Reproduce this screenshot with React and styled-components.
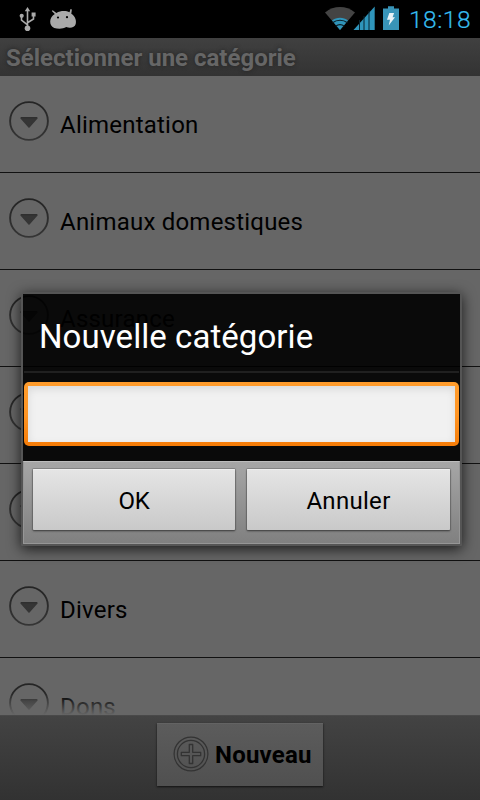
import React from 'react';
import styled, { createGlobalStyle } from 'styled-components';

const Global = createGlobalStyle`
  * { box-sizing: border-box; }
  body { margin: 0; background: #000; font-family: Roboto, sans-serif; }
`;

const Screen = styled.div`
  position: relative;
  width: 480px;
  height: 800px;
  overflow: hidden;
  display: flex;
  flex-direction: column;
  background: #666;
`;

const StatusBar = styled.div`
  height: 38px;
  flex: none;
  display: flex;
  justify-content: space-between;
  background: #000;
`;

const Clock = styled.span`
  color: #36bdef;
  font-size: 24.5px;
  line-height: 38px;
  letter-spacing: 0.5px;
  font-weight: 300;
  width: 71px;
  margin: 1px 0 0 1px;
  white-space: nowrap;
  -webkit-text-stroke: 0.2px #36bdef;
`;

const StatusRight = styled.div`
  display: flex;
`;

const TitleBar = styled.div`
  height: 38px;
  flex: none;
  padding-left: 6px;
  background: linear-gradient(#404040, #333);
  color: #666;
  font-size: 24px;
  font-weight: 700;
  line-height: 41px;
  letter-spacing: 0;
  white-space: nowrap;
  text-shadow: 0 0 4px #222;
`;

const List = styled.div`
  flex: 1;
  min-height: 0;
  overflow: hidden;
`;

const Row = styled.div`
  height: 97px;
  display: flex;
  align-items: flex-start;
  border-bottom: 1px solid #111;
`;

const Label = styled.span`
  margin: 29px 0 0 11px;
  color: #000;
  font-size: 24px;
  line-height: 40px;
  letter-spacing: 0.22px;
  white-space: nowrap;
`;

const RowIcon = styled.svg`
  flex: none;
  width: 40px;
  height: 40px;
  margin: 25px 0 0 9px;
`;

const BottomBar = styled.div`
  position: relative;
  height: 85px;
  flex: none;
  padding-top: 8px;
  display: flex;
  justify-content: center;
  align-items: flex-start;
  background: linear-gradient(#434343, #323232);
  border-top: 1px solid #494949;
`;

const Fade = styled.div`
  position: absolute;
  left: 0;
  right: 0;
  top: -22px;
  height: 21px;
  background: linear-gradient(rgba(102, 102, 102, 0), #666);
`;

const NewButton = styled.button`
  width: 166px;
  height: 63px;
  margin-top: -1px;
  padding: 0 0 0 15px;
  border: 0;
  display: flex;
  align-items: center;
  background: linear-gradient(#5c5c5c, #505050);
  box-shadow: 0 1px 2px #111, inset 0 1px #636363;
  font: 700 24px/62px Roboto, sans-serif;
  letter-spacing: 0.2px;
  color: #000;
`;

const PlusSvg = styled.svg`
  width: 38px;
  height: 38px;
  margin-bottom: 1px;
`;

const NewLabel = styled.span`
  margin-left: 5px;
`;

const Dialog = styled.div`
  position: absolute;
  left: 21px;
  top: 292px;
  width: 441px;
  height: 254px;
  border: 2px solid #555;
  border-radius: 2px;
  box-shadow: 0 3px 14px rgba(0, 0, 0, 0.75);
  display: flex;
  flex-direction: column;
`;

const DialogBody = styled.div`
  height: 167px;
  flex: none;
  display: flex;
  flex-direction: column;
  padding: 0 1px;
  background: rgba(0, 0, 0, 0.9);
`;

const DialogTitle = styled.div`
  height: 79px;
  flex: none;
  padding: 22px 0 0 15px;
  border-bottom: 2px solid #202020;
  color: #fff;
  font-size: 33px;
  line-height: 42px;
  letter-spacing: 0.06px;
  white-space: nowrap;
`;

const Field = styled.div`
  height: 64px;
  margin-top: 9px;
  padding: 4px;
  border-radius: 5px;
  background: linear-gradient(#ff9c2c, #ff9524 50%, #f57c08);
`;

const Input = styled.input`
  display: block;
  width: 100%;
  height: 56px;
  border: 0;
  outline: 0;
  padding: 0 12px;
  border-radius: 0;
  background: #f1f1f1;
  box-shadow: inset 0 3px 8px rgba(0, 0, 0, 0.1);
  font: 24px Roboto, sans-serif;
`;

const Actions = styled.div`
  flex: 1;
  display: flex;
  gap: 12px;
  padding: 7px 9px 0;
  background: linear-gradient(#a6a6a6, #808080);
  border: 1px solid #969696;
  border-top-color: #bcbcbc;
`;

const ActionButton = styled.button`
  width: ${(p) => p.$width};
  height: 61px;
  padding: 3px 0 0;
  border: 0;
  border-radius: 1px;
  background: linear-gradient(#e5e5e5, #c9c9c9);
  box-shadow: 0 0 0 1px rgba(85, 85, 85, 0.35), 0 1px 2px #333, inset 0 1px #efefef;
  color: #000;
  font: 24px/58px Roboto, sans-serif;
  letter-spacing: ${(p) => p.$spacing};
`;

const LeftIcons = () => (
  <svg width="90" height="38" viewBox="0 0 90 38">
    <g fill="none" stroke="#aaa" strokeWidth="1.6">
      <path d="M27.5 10v17M21.5 17v3.2l6 4.6M33.5 15v4l-6 3.8" />
    </g>
    <g fill="#aaa">
      <path d="M27.5 7l2.7 4.2h-5.4z" />
      <circle cx="27.5" cy="28.3" r="2.8" />
      <circle cx="21.7" cy="15.8" r="2.1" />
      <path d="M31.6 12.4h4v4h-4z" />
      <path d="M54.8 14L51.8 11l.9-.7 3.7 2.7c4-2.4 9.6-2.5 13.1-.8l1-3.2 1.4.4-.6 4.4c4.2 2.8 5.3 7 4.4 10.3-1 3.6-5.5 4.600-9.5 3-3.5 2-8.5 1.8-12 .8-5.5-2.3-5.3-10.5.6-13.9z" />
    </g>
    <circle cx="58" cy="17.5" r="1.1" fill="#000" />
    <circle cx="67" cy="17.2" r="1.1" fill="#000" />
  </svg>
);

const RightIcons = () => (
  <svg width="83" height="38" viewBox="325 0 83 38">
    <path d="M340 30L325 12.5C334 5.3 346 5.3 355 12.5z" fill="#444" />
    <path d="M340 30l-8-9.5c4.5-3.6 11.5-3.6 16 0z" fill="#2f95bb" />
    <path d="M332.5 22.8c4.5-3.4 10.5-3.4 15 0M335.6 26.3c2.8-2 6-2 8.800 0" fill="none" stroke="#0a1c24" strokeWidth="1.2" />
    <path d="M353.5 30L374.7 6.5V30z" fill="#2f95bb" />
    <path d="M359.5 20v10M364 16v14M369 11v19" stroke="#082430" strokeWidth="1" />
    <path d="M383 8.5h5V6.2h6v2.300h5V30h-16z" fill="#3894b8" />
    <path d="M389.3 13h4.8l-1.5 4.3h2.4l-6.3 8.2 1.3-5.7h-3z" fill="#e8f2f6" />
  </svg>
);

const Chevron = () => (
  <RowIcon viewBox="0 0 40 40">
    <defs>
      <linearGradient id="ring" x1="0" y1="0" x2="0" y2="1">
        <stop offset="0" stopColor="#242424" />
        <stop offset="1" stopColor="#353535" />
      </linearGradient>
    </defs>
    <circle cx="20" cy="20" r="18.9" fill="none" stroke="url(#ring)" strokeWidth="1.9" />
    <path d="M12 17h16l-8 9z" fill="#353535" stroke="#353535" strokeWidth="1.5" strokeLinejoin="round" />
    <path d="M12 16.7h16" stroke="#2c2c2c" strokeWidth="1" />
  </RowIcon>
);

const PlusIcon = () => (
  <PlusSvg viewBox="0 0 38 38" fill="none" stroke="#333" strokeWidth="1.3">
    <circle cx="19" cy="19" r="16.9" />
    <circle cx="19" cy="19" r="13.6" />
    <path d="M17.3 9.5h3.4v7.8h8v3.4h-8v7.8h-3.4v-7.8h-8v-3.4h8z" strokeLinejoin="round" />
  </PlusSvg>
);

const rows = [
  { label: 'Alimentation' },
  { label: 'Animaux domestiques' },
  { label: 'Assurance' },
  { label: '' },
  { label: '' },
  { label: 'Divers' },
  { label: 'Dons' },
];

export default function App() {
  return (
    <Screen>
      <Global />
      <StatusBar>
        <LeftIcons />
        <StatusRight>
          <RightIcons />
          <Clock>18:18</Clock>
        </StatusRight>
      </StatusBar>
      <TitleBar>Sélectionner une catégorie</TitleBar>
      <List>
        {rows.map((row, i) => (
          <Row key={i}>
            <Chevron />
            <Label>{row.label}</Label>
          </Row>
        ))}
      </List>
      <BottomBar>
        <Fade />
        <NewButton>
          <PlusIcon />
          <NewLabel>Nouveau</NewLabel>
        </NewButton>
      </BottomBar>
      <Dialog>
        <DialogBody>
          <DialogTitle>Nouvelle catégorie</DialogTitle>
          <Field>
            <Input />
          </Field>
        </DialogBody>
        <Actions>
          <ActionButton $width="202px" $spacing="-0.3px">OK</ActionButton>
          <ActionButton $width="203px" $spacing="0.3px">Annuler</ActionButton>
        </Actions>
      </Dialog>
    </Screen>
  );
}
